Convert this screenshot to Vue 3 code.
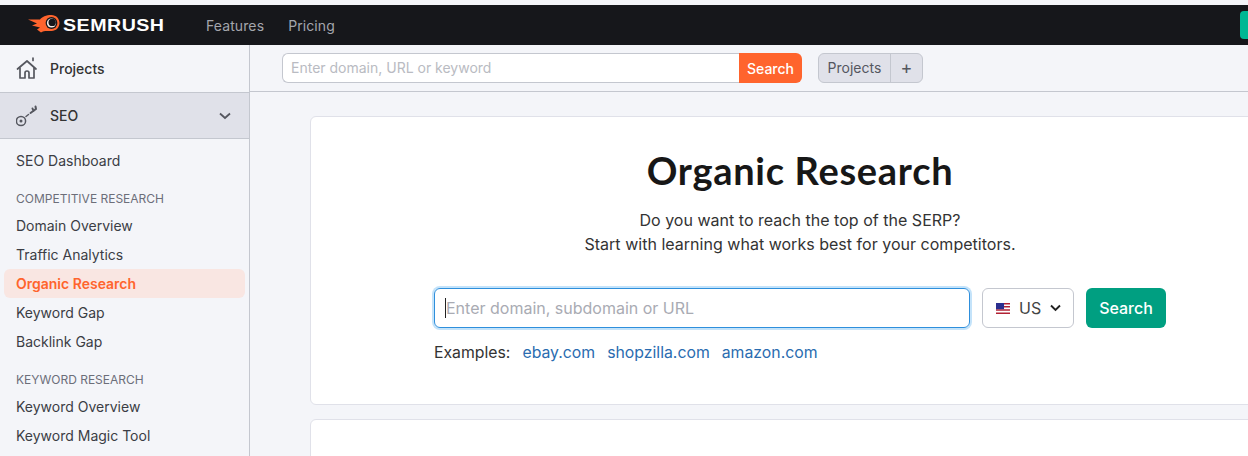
<script setup>
const groups = [
  { title: 'COMPETITIVE RESEARCH', items: ['Domain Overview', 'Traffic Analytics', 'Organic Research', 'Keyword Gap', 'Backlink Gap'] },
  { title: 'KEYWORD RESEARCH', items: ['Keyword Overview', 'Keyword Magic Tool'] }
]
const examples = ['ebay.com', 'shopzilla.com', 'amazon.com']
</script>

<template>
  <div class="page">
    <header class="topbar">
      <div class="brand">
        <svg class="flame" width="32" height="20" viewBox="0 0 32 20">
          <path fill="#ff642d" d="M0 4.500H12C14 2 18 0 23.500 0 28 0 31.500 3.600 31.500 8S28 16 23.500 16C19 16 15.500 15.500 13 17.500L9 14.500 12 12.500 4 10.500 9 8.500z" />
          <circle cx="23.500" cy="8" r="5.900" fill="#16171b" />
          <circle cx="23.500" cy="8" r="4.600" fill="#f5e9e2" />
          <circle cx="24.200" cy="7.400" r="3.700" fill="#16171b" />
        </svg>
        <span class="wordmark">SEMRUSH</span>
      </div>
      <nav class="topnav"><span>Features</span><span>Pricing</span></nav>
      <span class="cta"></span>
    </header>
    <div class="body">
      <aside class="sidebar">
        <div class="side-row">
          <svg width="22" height="24" viewBox="0 0 22 24" fill="none" stroke="#55575f" stroke-width="1.700" stroke-linejoin="round" stroke-linecap="round">
            <path d="M1.500 12 11 4l9 8" />
            <path d="M4 11v10h5v-5a2 2 0 0 1 4 0v5h5V11" />
            <path d="M17 1v2.500" />
          </svg>
          <span>Projects</span>
        </div>
        <div class="side-row active">
          <svg width="22" height="22" viewBox="0 0 22 22" fill="none" stroke="#55575f" stroke-width="1.500" stroke-linecap="round">
            <circle cx="5" cy="16" r="4.600" />
            <circle cx="5" cy="16" r="1.500" fill="#55575f" stroke="none" />
            <path d="M10 11.500 12.500 9.500" />
            <path stroke-width="2" d="M14.500 8 20 4M17.500 6 16.500 3.500M20 4 19.500 1.500" />
          </svg>
          <span>SEO</span>
          <svg class="chev" width="12" height="8" viewBox="0 0 12 8" fill="none" stroke="#55575f" stroke-width="1.800"><path d="m1 1.500 5 4.500 5-4.500" /></svg>
        </div>
        <div class="menu">
          <a class="item">SEO Dashboard</a>
          <template v-for="g in groups" :key="g.title">
            <div class="label">{{ g.title }}</div>
            <a v-for="i in g.items" :key="i" class="item" :class="{ current: i === 'Organic Research' }">{{ i }}</a>
          </template>
        </div>
      </aside>
      <main class="main">
        <div class="toolbar">
          <div class="mini-search">
            <span class="mini-input">Enter domain, URL or keyword</span>
            <span class="mini-btn">Search</span>
          </div>
          <div class="proj"><span class="proj-name">Projects</span><span class="proj-add">+</span></div>
        </div>
        <div class="content">
          <section class="card hero">
            <h1>Organic Research</h1>
            <p>Do you want to reach the top of the SERP?<br />Start with learning what works best for your competitors.</p>
            <div class="form">
              <div class="field"><i class="caret"></i><span>Enter domain, subdomain or URL</span></div>
              <div class="country">
                <svg width="14" height="11" viewBox="0 0 14 11">
                  <rect width="14" height="11" fill="#fff" />
                  <path fill="#b22234" d="M0 0h14v1.500H0zM0 3h14v1.500H0zM0 6.200h14v1.500H0zM0 9.500h14V11H0z" />
                  <rect width="8" height="6.200" fill="#2b2f8f" />
                </svg>
                <span>US</span>
                <svg width="11" height="8" viewBox="0 0 11 8" fill="none" stroke="#222" stroke-width="1.900"><path d="m1 1.500 4.500 4.500L10 1.500" /></svg>
              </div>
              <div class="go">Search</div>
            </div>
            <div class="examples">
              <span>Examples:</span>
              <a v-for="e in examples" :key="e">{{ e }}</a>
            </div>
          </section>
          <section class="card lower"></section>
        </div>
      </main>
    </div>
  </div>
</template>

<style scoped>
.page {
  width: 1248px;
  height: 456px;
  overflow: hidden;
  padding-top: 5px;
  box-sizing: border-box;
  background: #f4f5f9;
  font-family: Inter, "Liberation Sans", sans-serif;
  color: #333;
}
.topbar {
  height: 40px;
  background: #16171b;
  display: flex;
  align-items: center;
  padding-left: 28px;
}
.brand { display: flex; align-items: center; width: 178px; gap: 3px; }
.wordmark {
  font-family: "Liberation Sans", sans-serif;
  font-weight: 700;
  font-size: 16.500px;
  letter-spacing: 0.4px;
  color: #fff;
  transform: scaleX(1.190);
  transform-origin: left center;
}
.topnav { display: flex; gap: 24px; font-size: 14px; letter-spacing: 0.100px; color: #a4a6ad; }
.cta {
  margin-left: auto;
  width: 8px;
  height: 28px;
  background: #00b894;
  border-radius: 4px 0 0 4px;
}
.body { display: flex; height: 411px; }
.sidebar {
  width: 250px;
  flex: none;
  box-sizing: border-box;
  border-right: 1px solid #c4c7cf;
  font-size: 14px;
  color: #333;
}
.side-row {
  height: 47px;
  box-sizing: border-box;
  display: flex;
  align-items: center;
  padding-left: 16px;
  gap: 12px;
  font-weight: 500;
}
.side-row.active {
  background: #e0e1e9;
  border-top: 1px solid #c4c7cf;
  border-bottom: 1px solid #c4c7cf;
}
.chev { margin-left: auto; margin-right: 18px; }
.menu { display: flex; flex-direction: column; padding: 7px 4px 0; }
.item {
  height: 29px;
  line-height: 29px;
  padding-left: 12px;
  border-radius: 6px;
  color: #3b3d45;
}
.item.current { background: #f9e6e2; color: #ff642d; font-weight: 600; }
.label {
  height: 27px;
  line-height: 29px;
  margin-top: 9px;
  padding-left: 12px;
  font-size: 12px;
  color: #6c6e79;
}
.main { flex: 1; min-width: 0; }
.toolbar {
  height: 47px;
  box-sizing: border-box;
  border-bottom: 1px solid #c4c7cf;
  display: flex;
  align-items: center;
  padding: 0 0 1px 32px;
}
.mini-search { display: flex; width: 520px; height: 30px; }
.mini-input {
  flex: 1;
  box-sizing: border-box;
  background: #fff;
  border: 1px solid #c4c7cf;
  border-right: 0;
  border-radius: 6px 0 0 6px;
  padding-left: 8px;
  line-height: 28px;
  font-size: 14px;
  color: #b9bbc2;
}
.mini-btn {
  width: 63px;
  background: #ff642d;
  color: #fff;
  border-radius: 0 6px 6px 0;
  font-size: 14px;
  font-weight: 500;
  line-height: 32px;
  text-align: center;
}
.proj {
  display: flex;
  height: 30px;
  box-sizing: border-box;
  margin-left: 16px;
  background: #e0e1e9;
  border: 1px solid #c4c7cf;
  border-radius: 6px;
  font-size: 14px;
  line-height: 28px;
  color: #55575f;
}
.proj-name { width: 71px; text-align: center; border-right: 1px solid #c4c7cf; }
.proj-add { width: 31px; text-align: center; font-size: 18px; }
.content { padding: 24px 0 0 60px; display: flex; flex-direction: column; gap: 14px; }
.card {
  width: 980px;
  box-sizing: border-box;
  background: #fff;
  border: 1px solid #e0e1e9;
  border-radius: 6px;
}
.hero {
  height: 289px;
  display: flex;
  flex-direction: column;
  align-items: center;
}
.hero h1 {
  margin: 28px 0 0;
  font-family: Lato, sans-serif;
  font-size: 38px;
  line-height: 50px;
  font-weight: 700;
  letter-spacing: 0.700px;
  color: #171717;
}
.hero p {
  margin: 13px 0 0;
  font-size: 16px;
  line-height: 24px;
  letter-spacing: 0.020px;
  text-align: center;
  color: #333;
}
.form { display: flex; width: 732px; height: 40px; margin-top: 32px; }
.field {
  width: 536px;
  box-sizing: border-box;
  border: 1px solid #2e8fdc;
  border-radius: 6px;
  box-shadow: 0 0 0 2px #c4e3fa;
  display: flex;
  align-items: center;
  padding-left: 10px;
  font-size: 16px;
  color: #a9abb3;
}
.caret { width: 1px; height: 20px; background: #222; }
.country {
  width: 92px;
  box-sizing: border-box;
  margin-left: 12px;
  border: 1px solid #c4c7cf;
  border-radius: 6px;
  display: flex;
  align-items: center;
  padding-left: 13px;
  gap: 9px;
  font-size: 16px;
  color: #444;
}
.go {
  width: 80px;
  margin-left: 12px;
  background: #009f81;
  color: #fff;
  border-radius: 6px;
  font-size: 16px;
  font-weight: 500;
  line-height: 40px;
  text-align: center;
}
.examples {
  width: 732px;
  margin-top: 13px;
  display: flex;
  gap: 12px;
  font-size: 15.800px;
  line-height: 24px;
  color: #333;
}
.examples a { color: #2a6cb0; }
.lower { height: 60px; }
</style>
